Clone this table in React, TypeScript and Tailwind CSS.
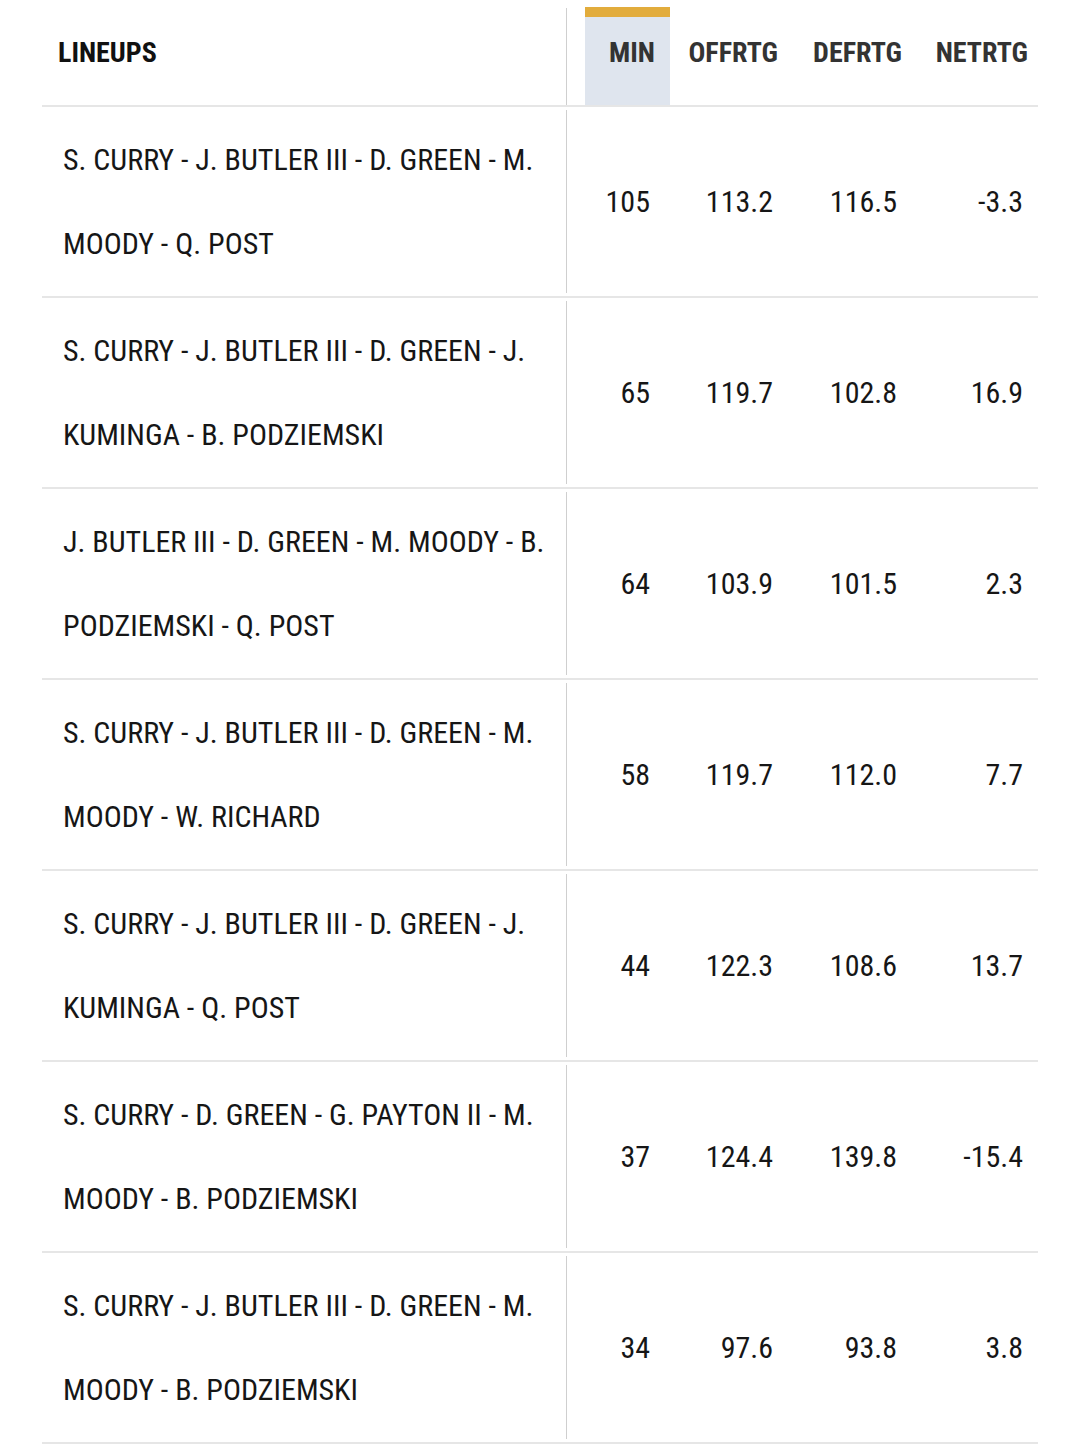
const rows = [
  { lineup: "S. CURRY - J. BUTLER III - D. GREEN - M. MOODY - Q. POST", min: "105", off: "113.2", def: "116.5", net: "-3.3" },
  { lineup: "S. CURRY - J. BUTLER III - D. GREEN - J. KUMINGA - B. PODZIEMSKI", min: "65", off: "119.7", def: "102.8", net: "16.9" },
  { lineup: "J. BUTLER III - D. GREEN - M. MOODY - B. PODZIEMSKI - Q. POST", min: "64", off: "103.9", def: "101.5", net: "2.3" },
  { lineup: "S. CURRY - J. BUTLER III - D. GREEN - M. MOODY - W. RICHARD", min: "58", off: "119.7", def: "112.0", net: "7.7" },
  { lineup: "S. CURRY - J. BUTLER III - D. GREEN - J. KUMINGA - Q. POST", min: "44", off: "122.3", def: "108.6", net: "13.7" },
  { lineup: "S. CURRY - D. GREEN - G. PAYTON II - M. MOODY - B. PODZIEMSKI", min: "37", off: "124.4", def: "139.8", net: "-15.4" },
  { lineup: "S. CURRY - J. BUTLER III - D. GREEN - M. MOODY - B. PODZIEMSKI", min: "34", off: "97.6", def: "93.8", net: "3.8" },
];

const grid = "grid grid-cols-[525px_18px_85px_123px_124px_121px]";

export default function App() {
  return (
    <div className="min-h-[1448px] bg-white font-['Roboto_Condensed','Roboto',sans-serif] font-stretch-condensed">
      <div className="ml-[42px] w-[996px]">
        <div className={`${grid} h-[107px] border-b-2 border-[#e6e6e6] text-[28px] font-bold`}>
          <div className="flex pl-4 pt-[8px]">
            <div className="flex h-[97px] w-full items-center border-r border-[#cfcfcf] pb-[8px] text-[#111]">
              LINEUPS
            </div>
          </div>
          <div />
          <div className="mt-[7px] flex flex-col bg-[#dfe5ee]">
            <div className="h-[10px] bg-[#e2ac3c]" />
            <div className="flex flex-1 items-center justify-end pb-[16px] pr-[15px] text-[#333]">MIN</div>
          </div>
          <div className="flex items-center justify-end pr-[15px] text-[#333]">OFFRTG</div>
          <div className="flex items-center justify-end pr-[15px] text-[#333]">DEFRTG</div>
          <div className="flex items-center justify-end pr-[10px] text-[#333]">NETRTG</div>
        </div>
        {rows.map((r) => (
          <div key={r.lineup} className={`${grid} h-[191px] border-b-2 border-[#e6e6e6] text-[30px] text-[#161616]`}>
            <div className="py-[3px]">
              <div className="flex h-full items-center border-r border-[#cfcfcf] pl-[21px] pr-[14px] leading-[84px]">
                {r.lineup}
              </div>
            </div>
            <div />
            <div className="flex items-center justify-end pr-[20px]">{r.min}</div>
            <div className="flex items-center justify-end pr-[20px]">{r.off}</div>
            <div className="flex items-center justify-end pr-[20px]">{r.def}</div>
            <div className="flex items-center justify-end pr-[15px]">{r.net}</div>
          </div>
        ))}
      </div>
    </div>
  );
}
